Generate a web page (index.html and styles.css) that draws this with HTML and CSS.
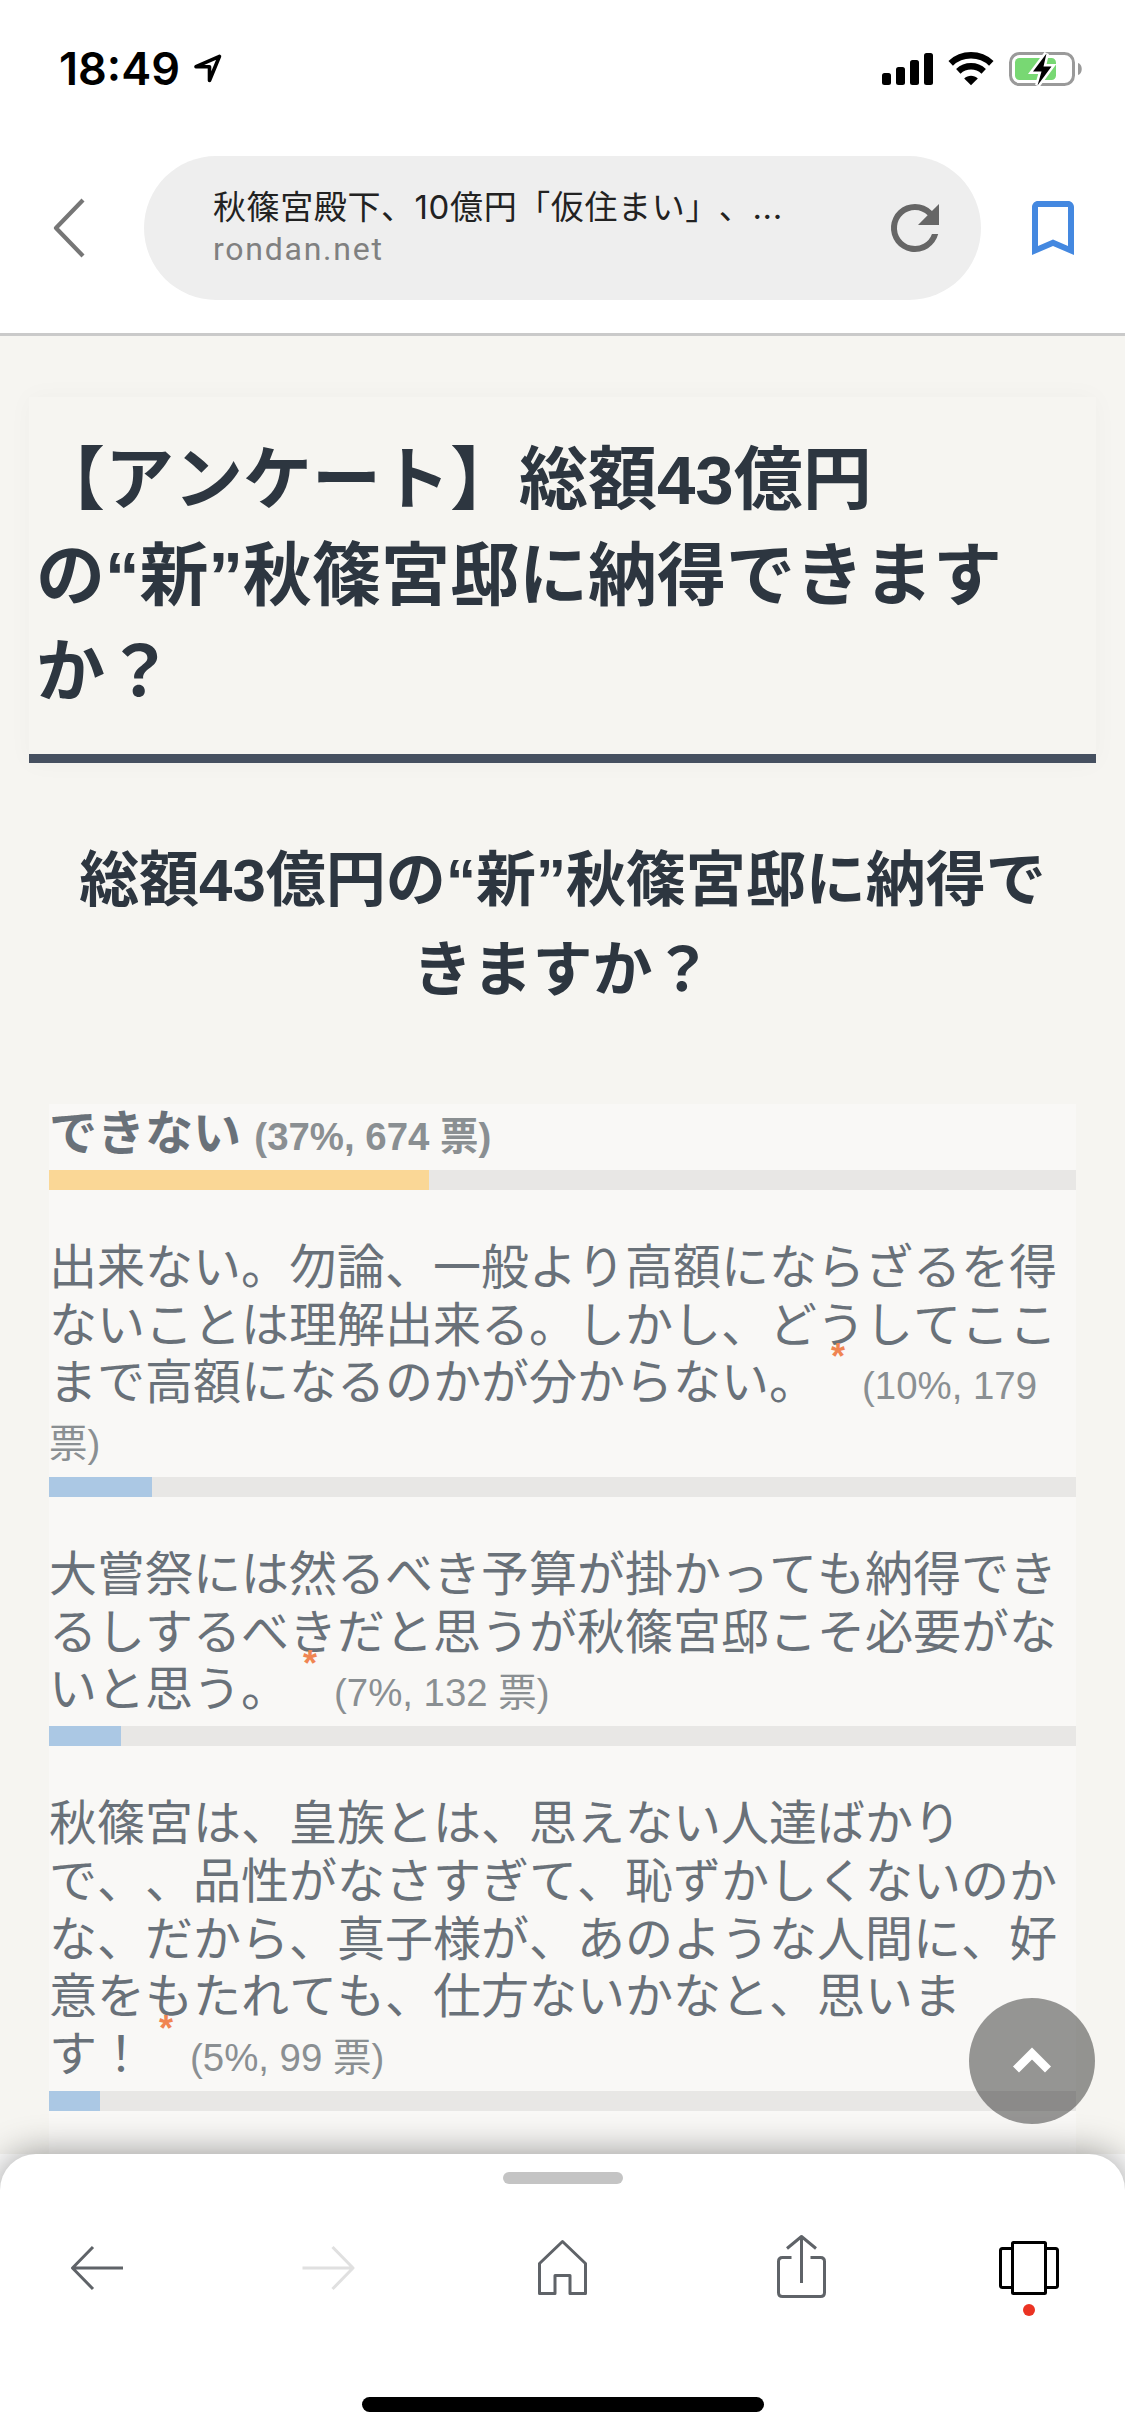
FILE: index.html
```html
<!DOCTYPE html>
<html lang="ja">
<head>
<meta charset="utf-8">
<title>アンケート</title>
<link rel="stylesheet" href="styles.css">
</head>
<body>
<div class="screen">
  <div class="status">
    <span class="time">18:49</span>
    <svg class="locate" width="34" height="34" viewBox="0 0 34 34"><path d="M28.500 5.300 5 15.700H18.500V29.500Z" fill="none" stroke="#000" stroke-width="3.600" stroke-linejoin="round"/></svg>
    <div class="status-right">
      <svg width="51" height="34" viewBox="0 0 51 34"><rect x="0" y="21" width="9" height="12" rx="2.500"/><rect x="14" y="15" width="9" height="18" rx="2.500"/><rect x="28" y="8" width="9" height="25" rx="2.500"/><rect x="42" y="1" width="9" height="32" rx="2.500"/></svg>
      <svg class="wifi" width="46" height="34" viewBox="0 0 46 34"><g fill="none" stroke="#000" stroke-width="6.500"><path d="M2.700 11.300C14 .600 32 .600 43.300 11.300"/><path d="M10.300 19.300C17.500 12.700 28.500 12.700 35.700 19.300"/></g><path d="M23 33.200 16.200 26.400C20 23 26 23 29.800 26.400Z"/></svg>
      <svg class="battery" width="75" height="36" viewBox="0 0 75 36"><rect x="1.500" y="2.500" width="63" height="31" rx="9" fill="none" stroke="#9a9a9a" stroke-width="3"/><path d="M69 12c5 1 5 11 0 12Z" fill="#9a9a9a"/><rect x="6" y="7" width="41" height="22" rx="4.500" fill="#78d873"/><path d="M37.500 2.500 24 20.500h8.500L28.500 34.500 42.500 15.500H34.500Z" fill="#000" stroke="#fff" stroke-width="5" paint-order="stroke"/></svg>
    </div>
  </div>
  <header class="toolbar">
    <svg class="back" width="34" height="64" viewBox="0 0 34 64"><path d="M31 4 4 32 31 60" fill="none" stroke="#767676" stroke-width="4.200" stroke-linejoin="round"/></svg>
    <div class="address">
      <div class="address-text">
        <div class="page-title">秋篠宮殿下、10億円「仮住まい」、...</div>
        <div class="domain">rondan.net</div>
      </div>
      <svg width="72" height="72" viewBox="0 0 24 24"><path fill="#666" d="M17.650 6.350A7.958 7.958 0 0 0 12 4a8 8 0 1 0 7.730 10h-2.080A6 6 0 1 1 12 6c1.660 0 3.140.690 4.220 1.780L13 11h7V4z"/></svg>
    </div>
    <svg class="bookmark" width="72" height="72" viewBox="0 0 24 24"><path fill="#4488e0" d="M17 3H7c-1.100 0-2 .900-2 2v16l7-3 7 3V5c0-1.100-.900-2-2-2m0 15-5-2.180L7 18V5h10z"/></svg>
  </header>
  <main class="page">
    <h1>【アンケート】総額43億円<br>の<q>新</q>秋篠宮邸に納得できます<br>か？</h1>
    <h2>総額43億円の<q>新</q>秋篠宮邸に納得で<br>きますか？</h2>
    <ul class="poll">
      <li class="top"><p>できない <small>(37%, 674 票)</small></p><div class="track"><div class="fill" style="width:37%"></div></div></li>
      <li><p>出来ない。勿論、一般より高額にならざるを得<br>ないことは理解出来る。しかし、どうしてここ<br>まで高額になるのかが分からない。<sup>*</sup><small>(10%, 179<br>票)</small></p><div class="track"><div class="fill" style="width:10%"></div></div></li>
      <li><p>大嘗祭には然るべき予算が掛かっても納得でき<br>るしするべきだと思うが秋篠宮邸こそ必要がな<br>いと思う。<sup>*</sup><small>(7%, 132 票)</small></p><div class="track"><div class="fill" style="width:7%"></div></div></li>
      <li><p>秋篠宮は、皇族とは、思えない人達ばかり<br>で、、品性がなさすぎて、恥ずかしくないのか<br>な、だから、真子様が、あのような人間に、好<br>意をもたれても、仕方ないかなと、思いま<br>す！<sup>*</sup><small>(5%, 99 票)</small></p><div class="track"><div class="fill" style="width:5%"></div></div></li>
    </ul>
  </main>
  <button class="to-top" aria-label="トップへ"><svg width="40" height="28" viewBox="0 0 40 28"><path d="M4 22.500 20 6.500 36 22.500" fill="none" stroke="#fff" stroke-width="8.500"/></svg></button>
  <footer class="dock">
    <div class="sheet">
      <div class="grabber"></div>
      <nav>
        <svg width="60" height="80" viewBox="0 0 60 80" fill="none" stroke="#5f6368" stroke-width="3"><path d="M56 40H6M26 19 5.500 40 26 61" stroke-linejoin="round"/></svg>
        <svg width="60" height="80" viewBox="0 0 60 80" fill="none" stroke="#e0e0e0" stroke-width="3"><path d="M2.500 40H52.500M32.500 19 53 40 32.500 61" stroke-linejoin="round"/></svg>
        <svg width="60" height="80" viewBox="0 0 60 80" fill="none" stroke="#5f6368" stroke-width="3"><path d="M7.500 35.500 30.500 13.500 53.500 35.500V65.500H38V47.500H23V65.500H7.500Z" stroke-linejoin="round"/></svg>
        <svg class="share" width="60" height="80" viewBox="0 0 60 80" fill="none" stroke="#5f6368" stroke-width="3"><path d="M20.500 29.500H11.500Q7.500 29.500 7.500 33.500V64.500Q7.500 68.500 11.500 68.500H49.500Q53.500 68.500 53.500 64.500V33.500Q53.500 29.500 49.500 29.500H39.500M30.500 55V9M16 20.500 30.500 8.500 45 20.500" stroke-linejoin="round"/></svg>
        <svg width="64" height="96" viewBox="0 0 64 96" fill="none" stroke="#000" stroke-width="3"><rect x="15.500" y="22.500" width="33" height="51" rx="1"/><path d="M15.500 28.500H5.500Q3.500 28.500 3.500 30.500V65.500Q3.500 67.500 5.500 67.500H15.500M48.500 28.500H58.500Q60.500 28.500 60.500 30.500V65.500Q60.500 67.500 58.500 67.500H48.500"/><circle cx="32" cy="90" r="6" fill="#eb3323" stroke="none"/></svg>
      </nav>
      <div class="home-indicator"></div>
    </div>
  </footer>
</div>
</body>
</html>
```
FILE: styles.css
```css
* { box-sizing: border-box; }
body, h1, h2, p, ul { margin: 0; padding: 0; }
svg { display: block; flex: none; }
body { background: #fff; }

.screen {
  position: relative;
  width: 1125px;
  height: 2436px;
  overflow: hidden;
  display: flex;
  flex-direction: column;
  font-family: "Liberation Sans", "Noto Sans CJK JP", sans-serif;
  font-kerning: none;
  text-spacing-trim: space-all;
}

.status {
  display: flex;
  height: 132px;
  padding: 0 44px 0 59px;
  flex: none;
}
.time {
  font: 600 45px/54px Inter, sans-serif;
  width: 132px;
  margin-top: 42px;
  white-space: nowrap;
}
.locate { margin-top: 51px; }
.status-right { display: flex; margin: 52px 0 0 auto; }
.wifi { margin-left: 15px; }
.battery { margin: -1px -3px 0 15px; }

.toolbar {
  display: flex;
  align-items: center;
  flex: none;
  height: 204px;
  padding: 0 36px 12px 52px;
  border-bottom: 3px solid #cacaca;
}
.back, .bookmark { margin-top: 2px; }
.address {
  display: flex;
  align-items: center;
  justify-content: space-between;
  width: 837px;
  height: 144px;
  margin: 3px 36px 0 58px;
  padding: 0 30px 0 69px;
  border-radius: 72px;
  background: #eee;
}
.page-title {
  font: 400 33px/42px Inter, "Noto Sans CJK JP", sans-serif;
  font-kerning: none;
  letter-spacing: .6px;
  color: #222;
  white-space: nowrap;
}
.domain {
  font: 400 32px/42px Roboto, sans-serif;
  letter-spacing: 1.75px;
  color: #808080;
}

.page {
  height: 1818px;
  flex: none;
  overflow: hidden;
  padding: 61px 29px 0;
  background: #f6f5f1;
  color: #2d3640;
}
h1 {
  height: 366px;
  padding: 36px 7px 0;
  border-bottom: 9px solid #465060;
  box-shadow: 0 0 24px rgba(0, 0, 60, .03);
  font-size: 69px;
  line-height: 96px;
  white-space: nowrap;
}
h2 {
  margin-top: 73px;
  font-size: 60px;
  line-height: 90px;
  text-align: center;
  white-space: nowrap;
}
q { quotes: "“" "”"; }

.poll {
  width: 1027px;
  height: 1100px;
  margin: 88px 0 0 20px;
  background: #f9f8f6;
  list-style: none;
}
.poll li { color: #697179; }
.poll p {
  padding-top: 49px;
  font-size: 48px;
  line-height: 57.6px;
  white-space: nowrap;
}
.poll .top p { padding-top: .8px; font-weight: 700; }
small { font-size: 38.4px; line-height: 0; color: #8a8f92; }
sup {
  display: inline-block;
  width: 45px;
  height: 0;
  padding-left: 14px;
  font-size: 36px;
  font-weight: 700;
  line-height: 0;
  vertical-align: 30px;
  color: #f08552;
}
.track { height: 20px; margin-top: 7.6px; background: #e8e7e5; }
.fill { height: 20px; background: #abc8e4; }
.top .fill { background: #fad796; }

.to-top {
  position: absolute;
  left: 969px;
  top: 1998px;
  width: 126px;
  height: 126px;
  display: grid;
  place-items: center;
  padding: 0;
  border: 0;
  border-radius: 50%;
  background: rgba(0, 0, 0, .4);
}

.dock { height: 282px; flex: none; }
.sheet {
  display: flex;
  flex-direction: column;
  align-items: center;
  height: 282px;
  padding-top: 18px;
  border-radius: 36px 36px 0 0;
  background: #fff;
  box-shadow: 0 0 36px rgba(0, 0, 0, .42);
}
.grabber { width: 120px; height: 12px; border-radius: 6px; background: #c4c4c4; }
nav {
  display: flex;
  justify-content: space-between;
  align-items: center;
  width: 100%;
  height: 168px;
  padding: 0 64px 0 67px;
}
.share { margin: 0 -6px 0 6px; }
.home-indicator { width: 402px; height: 15px; margin-top: 45px; border-radius: 8px; background: #000; }
```
